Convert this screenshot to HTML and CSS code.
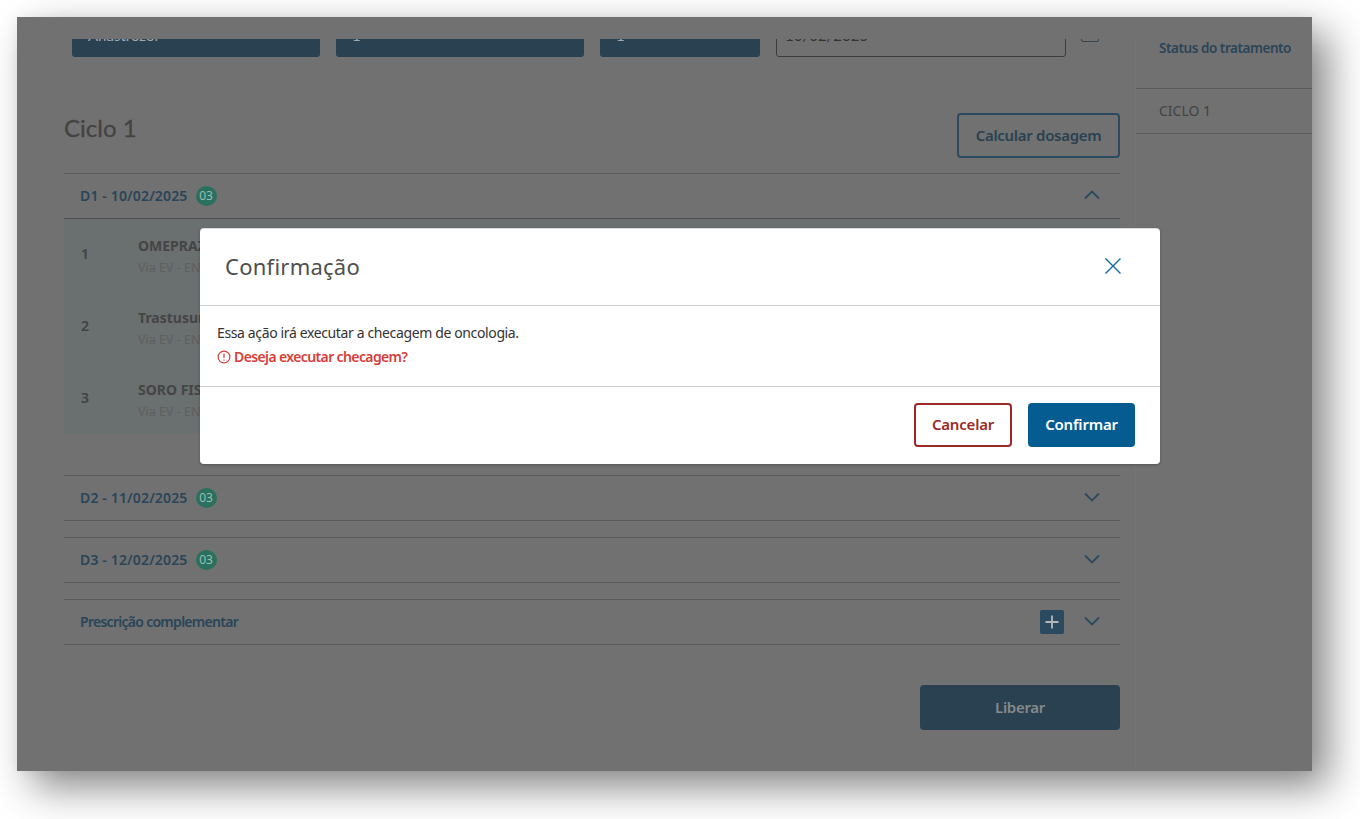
FILE: index.html
```html
<!DOCTYPE html>
<html lang="pt-BR">
<head>
<meta charset="utf-8">
<title>Confirmação</title>
<link rel="stylesheet" href="styles.css">
</head>
<body>
<div class="window">
  <div class="topbar"></div>
  <div class="content">
    <main class="main">
      <div class="fields">
        <div class="field-btn wide">Anastrozol</div>
        <div class="field-btn wide">1</div>
        <div class="field-btn narrow">1</div>
        <div class="field-input">10/02/2025</div>
        <div class="field-icon"></div>
      </div>
      <div class="title-row">
        <h1 class="cycle-title">Ciclo 1</h1>
        <button class="btn-outline">Calcular dosagem</button>
      </div>
      <section class="acc acc-first">
        <div class="acc-head">
          <div class="acc-label">D1 - 10/02/2025 <span class="badge">03</span></div>
          <svg class="chev" viewBox="0 0 16 10"><path d="M1 8.5 8 1.5l7 7"/></svg>
        </div>
        <div class="acc-body">
          <div class="med"><span class="med-n">1</span><div class="med-info"><div class="med-name">OMEPRAZOL</div><div class="med-sub">Via EV - ENDOVENOSA</div></div></div>
          <div class="med"><span class="med-n">2</span><div class="med-info"><div class="med-name">Trastusumabe</div><div class="med-sub">Via EV - ENDOVENOSA</div></div></div>
          <div class="med"><span class="med-n">3</span><div class="med-info"><div class="med-name">SORO FISIOLÓGICO</div><div class="med-sub">Via EV - ENDOVENOSA</div></div></div>
        </div>
      </section>
      <section class="acc acc-d2">
        <div class="acc-head">
          <div class="acc-label">D2 - 11/02/2025 <span class="badge">03</span></div>
          <svg class="chev" viewBox="0 0 16 10"><path d="M1 1.5l7 7 7-7"/></svg>
        </div>
      </section>
      <section class="acc acc-next">
        <div class="acc-head">
          <div class="acc-label">D3 - 12/02/2025 <span class="badge">03</span></div>
          <svg class="chev" viewBox="0 0 16 10"><path d="M1 1.5l7 7 7-7"/></svg>
        </div>
      </section>
      <section class="acc acc-next">
        <div class="acc-head">
          <div class="acc-label acc-label-text">Prescrição complementar</div>
          <div class="acc-tools">
            <span class="plus"><svg viewBox="0 0 24 24"><path d="M12 5.5v13M5.5 12h13"/></svg></span>
            <svg class="chev" viewBox="0 0 16 10"><path d="M1 1.5l7 7 7-7"/></svg>
          </div>
        </div>
      </section>
      <div class="actions"><button class="btn-release">Liberar</button></div>
    </main>
    <aside class="side">
      <div class="side-status">Status do tratamento</div>
      <div class="side-cycle">CICLO 1</div>
    </aside>
  </div>

  <div class="modal" role="dialog">
    <header class="modal-head">
      <h2 class="modal-title">Confirmação</h2>
      <svg class="modal-close" viewBox="0 0 16 16"><path d="M.5.5l15 15M15.500.5l-15 15"/></svg>
    </header>
    <div class="modal-body">
      <p class="modal-text">Essa ação irá executar a checagem de oncologia.</p>
      <p class="modal-warn">
        <svg class="warn-icon" viewBox="0 0 14 14"><circle cx="7" cy="7" r="5.9"/><path d="M7 3.6v4.300M7 9.500v1.100"/></svg>
        Deseja executar checagem?
      </p>
    </div>
    <footer class="modal-foot">
      <button class="btn-cancel">Cancelar</button>
      <button class="btn-confirm">Confirmar</button>
    </footer>
  </div>
</div>
</body>
</html>
```
FILE: styles.css
```css
* { box-sizing: border-box; }
html, body { margin: 0; padding: 0; }
body {
  width: 1360px;
  height: 819px;
  overflow: hidden;
  background: #fff;
  padding: 17px;
  font-family: "Noto Sans", "Open Sans", sans-serif;
}
.window {
  position: relative;
  width: 1295px;
  height: 754px;
  background: #717171;
  box-shadow: 16px 16px 38px rgba(0, 0, 0, .48), 0 0 12px rgba(0, 0, 0, .05);
  display: flex;
  flex-direction: column;
}
.topbar { height: 22px; flex: none; }
.content { flex: 1; display: flex; overflow: hidden; }
.main { width: 1119px; flex: none; padding: 0 16px 0 47px; }

.fields { display: flex; align-items: flex-end; gap: 16px; padding-left: 8px; margin-top: -26px; height: 44px; }
.field-btn {
  height: 44px;
  background: #2a4152;
  color: #a5a9ad;
  border-radius: 3px;
  font: 15px/45px Lato, sans-serif;
  padding-left: 16px;
}
.wide { width: 248px; }
.narrow { width: 160px; }
.field-input {
  width: 290px;
  height: 44px;
  border: 1px solid #3c3c3c;
  border-radius: 3px;
  color: #333;
  font: 15px/43px Lato, sans-serif;
  padding-left: 8px;
}
.field-icon {
  width: 18px;
  height: 18px;
  margin: 0 0 15px -1px;
  border: 1.500px solid #38434b;
  border-radius: 2px;
}

.title-row { display: flex; justify-content: space-between; align-items: flex-start; height: 116px; padding-top: 56px; }
.cycle-title { margin: -1px 0 0; font: 400 24px/32px Lato, sans-serif; color: #434343; -webkit-text-stroke: .3px #434343; }
.btn-outline {
  width: 163px;
  height: 45px;
  background: none;
  border: 2px solid #2a4a60;
  border-radius: 4px;
  color: #2a4152;
  font: 600 15px/1 "Noto Sans", sans-serif;
  letter-spacing: -.3px;
  padding: 0;
}

.acc { border-top: 1px solid #5a5a5a; }
.acc-d2 { margin-top: 41px; }
.acc-next { margin-top: 16px; }
.acc-head {
  height: 45px;
  border-bottom: 1px solid #5a5a5a;
  display: flex;
  align-items: center;
  justify-content: space-between;
  padding: 0 20px 2px 16px;
}
.acc-first .acc-head { border-bottom-color: #4e4e4e; }
.acc-label {
  display: flex;
  align-items: center;
  gap: 8px;
  margin-top: 2px;
  color: #2a4558;
  font: 600 14px/20px "Noto Sans", sans-serif;
  letter-spacing: .15px;
}
.acc-label-text { letter-spacing: -.72px; }
.badge {
  width: 21px;
  height: 20px;
  border-radius: 50%;
  background: #2a705e;
  color: #9dbdb4;
  font: 400 12px/20px "Noto Sans", sans-serif;
  letter-spacing: 0;
  text-align: center;
}
.chev { width: 16px; height: 10px; fill: none; stroke: #2a4a60; stroke-width: 1.800; }
.acc-tools { display: flex; align-items: center; gap: 20px; }
.plus {
  width: 24px;
  height: 24px;
  background: #2a4a60;
  border-radius: 2px;
  display: block;
  margin-top: 2px;
}
.plus svg { display: block; width: 24px; height: 24px; fill: none; stroke: #b4b8bb; stroke-width: 1.800; }

.acc-body { background: #6a6f6f; height: 215px; }
.med { height: 72px; display: flex; align-items: center; padding-left: 17px; }
.med-n { width: 57px; padding-bottom: 2px; color: #424242; font: 600 14px/1 "Noto Sans", sans-serif; }
.med-info { width: 62px; padding-top: 2px; overflow: hidden; white-space: nowrap; }
.med-name { color: #454545; font: 700 14px/18px "Noto Sans", sans-serif; margin-bottom: 5px; }
.med-sub { color: #5f5f5f; font: 400 12.500px/16px "Noto Sans", sans-serif; }

.actions { display: flex; justify-content: flex-end; margin-top: 40px; }
.btn-release {
  width: 200px;
  height: 45px;
  background: #2a4152;
  border: 0;
  border-radius: 4px;
  color: #85898c;
  font: 600 15px/1 "Noto Sans", sans-serif;
  letter-spacing: -.3px;
  padding: 0;
}

.side { flex: 1; box-shadow: -1px 0 0 #747474; }
.side-status {
  height: 50px;
  border-bottom: 1px solid #5a5a5a;
  padding: 0 0 0 23px;
  color: #2a4558;
  font: 600 13.500px/19px "Noto Sans", sans-serif;
  letter-spacing: -.45px;
}
.side-cycle {
  height: 45px;
  border-bottom: 1px solid #5a5a5a;
  padding-left: 23px;
  color: #434343;
  font: 400 14px/44px "Noto Sans", sans-serif;
}

.modal {
  position: absolute;
  left: 183px;
  top: 211px;
  width: 960px;
  height: 236px;
  background: #fff;
  border-radius: 4px;
  border-top: 1px solid #ddd;
  box-shadow: 0 1px 3px rgba(0, 0, 0, .25);
  display: flex;
  flex-direction: column;
}
.modal-head {
  height: 77px;
  flex: none;
  border-bottom: 1px solid #ccc;
  display: flex;
  align-items: center;
  justify-content: space-between;
  padding: 0 39px 2px 25px;
}
.modal-title { margin: 0; color: #4f4f4f; font: 400 22px/30px "Noto Sans", sans-serif; letter-spacing: .25px; }
.modal-close { width: 16px; height: 16px; fill: none; stroke: #0f6aa0; stroke-width: 1.400; }
.modal-body { height: 81px; flex: none; border-bottom: 1px solid #ccc; padding: 17px 17px 0; }
.modal-text { margin: 0 0 4px; color: #333; font: 400 14px/20px "Noto Sans", sans-serif; letter-spacing: -.37px; }
.modal-warn {
  margin: 0;
  display: flex;
  align-items: center;
  gap: 3px;
  color: #d63e3a;
  font: 600 14px/20px "Noto Sans", sans-serif;
  letter-spacing: -.62px;
}
.warn-icon { width: 14px; height: 14px; fill: none; stroke: #d63e3a; stroke-width: 1.200; }
.modal-foot { flex: 1; display: flex; justify-content: flex-end; gap: 16px; padding: 16px 25px 0 0; }
.btn-cancel, .btn-confirm {
  height: 44px;
  border-radius: 4px;
  font: 600 15px/1 "Noto Sans", sans-serif;
  letter-spacing: -.2px;
  padding: 0 0 2px;
}
.btn-cancel { width: 98px; background: #fff; border: 2px solid #9b2a26; color: #9b2a26; }
.btn-confirm { width: 107px; background: #045c90; border: 0; color: #fff; }
```
